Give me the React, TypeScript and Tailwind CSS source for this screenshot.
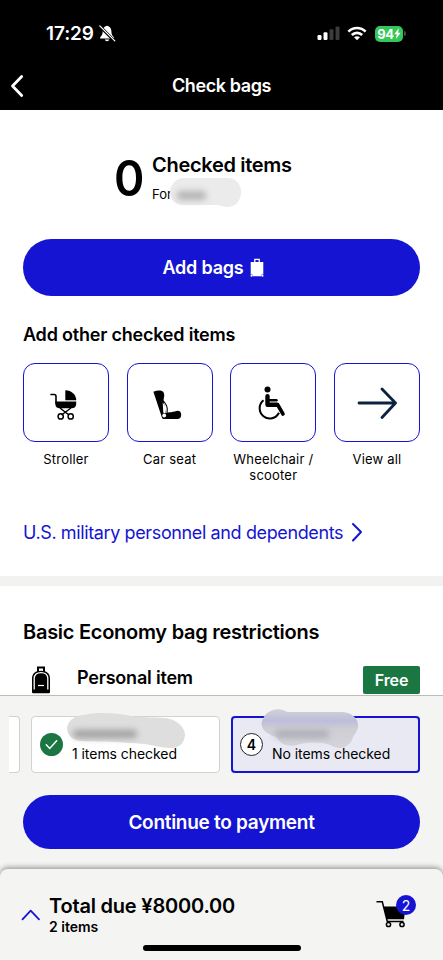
import * as React from 'react';

interface OtherItem {
  label: string;
  icon: React.ReactNode;
}

function StrollerIcon() {
  return (
    <svg className="mt-[4px] mr-[4px]" width="28" height="30" viewBox="0 0 28 30" fill="none">
      <path d="M1 4.5h3.2c1.2 0 1.8.7 1.8 1.9V13" stroke="#000" strokeWidth="1.6" strokeLinecap="round" />
      <path d="M5.3 11.6h20.9v2.1c0 3-1.8 4.5-4.6 4.5H9.9c-2.8 0-4.6-1.5-4.6-4.5z" fill="#000" />
      <path d="M15.3.3C21.6.5 26 4.6 26.3 10.2h-11z" fill="#000" />
      <path d="m10 18 9 7m2-7-9.5 7" stroke="#000" strokeWidth="1.5" />
      <circle cx="10.7" cy="26.4" r="2.6" stroke="#000" strokeWidth="1.5" />
      <circle cx="20.7" cy="26.4" r="2.6" stroke="#000" strokeWidth="1.5" />
    </svg>
  );
}

function CarSeatIcon() {
  return (
    <svg className="mt-[5px] mr-[6px]" width="30" height="30" viewBox="0 0 30 30" fill="none">
      <path
        d="M1.4 1.8C4.4.5 7.7.2 9.9 1c1.9.8 2.600 3 2.300 5.200-.2 1.500-.7 2.800-.6 4.300l2.100 12.700c1.400-1 3.200-.8 5.500-1 2.900-.2 4.600-1.400 6.600-1.400 2 0 3.400 1.500 3.400 3.900 0 3.100-1.500 4.300-3.900 4.300H12.300c-1.200 0-2-.6-2.400-1.600z"
        fill="#000"
      />
      <path d="M10.500 10.500c3.900 2.500 5.700 7.800 4.500 12.500" stroke="#000" strokeWidth="1.1" />
      <path d="M10.700 12.300c2.400 3 3.300 6.800 2.600 11l-2-.5z" fill="#fff" />
      <circle cx="12.200" cy="25.500" r="1.900" fill="#fff" />
    </svg>
  );
}

function WheelchairIcon() {
  return (
    <svg className="mt-[2px] mr-[3px]" width="29" height="35" viewBox="0 0 29 35" fill="none" stroke="#000">
      <circle cx="10.5" cy="3.5" r="3" fill="#000" stroke="none" />
      <path d="M10.5 10.2v8.600h9.500" strokeWidth="4.400" strokeLinecap="round" strokeLinejoin="round" />
      <path d="m20.800 19 5.200 9" strokeWidth="3.600" strokeLinecap="round" />
      <path d="M11 14.300h8.500" strokeWidth="2.400" strokeLinecap="round" />
      <path d="M6.500 14.300a10.200 10.200 0 1 0 15.500 12.500" strokeWidth="2" />
    </svg>
  );
}

function ArrowIcon() {
  return (
    <svg width="40" height="34" viewBox="0 0 40 34" fill="none">
      <path d="M2 17h36M25 3l13.500 14L25 31.500" stroke="#0c2340" strokeWidth="2.800" strokeLinecap="round" strokeLinejoin="round" />
    </svg>
  );
}

const OTHER_ITEMS: OtherItem[] = [
  { label: 'Stroller', icon: <StrollerIcon /> },
  { label: 'Car seat', icon: <CarSeatIcon /> },
  { label: 'Wheelchair / scooter', icon: <WheelchairIcon /> },
  { label: 'View all', icon: <ArrowIcon /> },
];

function StatusBar() {
  return (
    <div className="flex h-[62px] items-center pt-[5px] pl-[46px] pr-[37px]">
      <span className="text-[19px] font-semibold tracking-[-0.1px] leading-6">17:29</span>
      <svg className="ml-[5px]" width="17" height="17" viewBox="0 0 17 17">
        <path d="M8 .8c-3 .6-4.300 2.900-4.300 5.500 0 3.400-1.200 4.600-2.500 6v1.200h13.700v-1.200c-1.400-1.400-2.500-2.600-2.500-6 0-2.600-1.300-4.900-4.400-5.500zM5.800 14.500c.4 1.300 1.100 1.700 2.200 1.700s1.900-.4 2.300-1.700z" fill="#fff" />
        <path d="M.5 1 15.500 16" stroke="#000" strokeWidth="3" />
        <path d="m.8.8 15 15" stroke="#fff" strokeWidth="1.200" strokeLinecap="round" />
      </svg>
      <div className="ml-auto flex items-center">
        <svg width="23" height="15" viewBox="0 0 23 15">
          <rect x="0.5" y="9" width="4" height="5" rx="1.2" fill="#fff" />
          <rect x="6.5" y="6.3" width="4" height="7.7" rx="1.2" fill="#fff" />
          <rect x="12.5" y="3.3" width="4" height="10.7" rx="1.2" fill="#3c3c3c" />
          <rect x="18.5" y="0.5" width="4" height="13.5" rx="1.2" fill="#3c3c3c" />
        </svg>
        <svg className="ml-[7px]" width="20" height="15" viewBox="0 0 20 15" fill="none" stroke="#fff" strokeWidth="2.6">
          <path d="M1.400 5.600c4.900-4.900 12.300-4.900 17.200 0" />
          <path d="M4.800 9c3-2.900 7.400-2.900 10.400 0" />
          <path d="m10 14.300-3-3c1.700-1.500 4.300-1.500 6 0z" fill="#fff" stroke="none" />
        </svg>
        <div className="ml-[8px] flex h-4 w-7 items-center justify-center rounded-[5px] bg-[#34c759]">
          <span className="text-[13px] font-bold leading-4 tracking-[-0.3px]">94</span>
          <svg width="7" height="11" viewBox="0 0 7 11">
            <path d="M4.800 0 .3 6.200h2.500L1.900 11l4.800-6.300H4.100z" fill="#fff" />
          </svg>
        </div>
        <div className="ml-px h-[5px] w-[2px] rounded-r bg-[#4a4a4a]" />
      </div>
    </div>
  );
}

function Header() {
  return (
    <header className="h-[110px] bg-black text-white">
      <StatusBar />
      <div className="flex h-12 items-center px-[9px]">
        <svg width="16" height="24" viewBox="0 0 16 24" fill="none">
          <path d="M12.700 2.500 3.500 12l9.200 9.500" stroke="#fff" strokeWidth="2.800" strokeLinecap="round" strokeLinejoin="round" />
        </svg>
        <h1 className="flex-1 pr-4 text-center text-[18px] font-semibold leading-6 tracking-[-0.4px]">Check bags</h1>
      </div>
    </header>
  );
}

function SuitcaseIcon() {
  return (
    <svg width="14" height="20" viewBox="0 0 14 20">
      <path d="M4.800 4V1.300h4.400V4" fill="none" stroke="#fff" strokeWidth="1.300" />
      <path d="M.7 4h12.600v12.500H.7zM2.500 16h9v2.200h-9z" fill="#fff" />
      <circle cx="1.500" cy="17.800" r="1" fill="#fff" />
      <circle cx="12.500" cy="17.800" r="1" fill="#fff" />
    </svg>
  );
}

function BackpackIcon() {
  return (
    <svg width="20" height="28" viewBox="0 0 20 28" fill="none">
      <path d="M7 6V1.500h6V6" stroke="#000" strokeWidth="2" />
      <path d="M1 26V12.500C1 7.500 4.500 4.800 10 4.800s9 2.700 9 7.700V26c0 .8-.5 1.200-1.200 1.200H2.200C1.500 27.200 1 26.800 1 26z" fill="#000" />
      <path d="M3.200 23.500V12.500c0-4 3-5.900 6.800-5.900s6.800 1.900 6.800 5.900v11" stroke="#fff" strokeWidth="1.300" />
      <path d="M7 19.500h6" stroke="#fff" strokeWidth="1.200" />
    </svg>
  );
}

function CartIcon() {
  return (
    <svg width="30" height="28" viewBox="0 0 30 28" fill="none">
      <path d="M.5 1.700h5.800l5 19.800h16.200" stroke="#000" strokeWidth="1.500" />
      <path d="M7.500 6.500h22L28 19.300H10.700z" fill="#000" />
      <circle cx="12.500" cy="24.500" r="2.100" stroke="#000" strokeWidth="1.500" />
      <circle cx="26" cy="24.500" r="2.100" stroke="#000" strokeWidth="1.500" />
    </svg>
  );
}

function BagSummary() {
  return (
    <div className="flex h-[129px] pt-[41px] pl-[114px]">
      <span className="w-[38px] origin-left scale-x-[0.94] text-[49px] font-semibold leading-[55px]">0</span>
      <div>
        <h2 className="text-[20px] font-semibold leading-7 tracking-[-0.3px]">Checked items</h2>
        <div className="relative text-[13px] leading-[30px]">
          For
          {/* Hidden passenger name */}
          <svg className="absolute left-[18px] top-[-2px]" width="72" height="33" viewBox="0 0 72 33">
            <path d="M14 1h43c9 0 14 6 14 14 0 9-6 15-14 15-5 0-7-2-11-2H14C5 28 0 22 0 15S6 1 14 1z" fill="#ebebeb" />
            <rect x="7" y="14" width="29" height="9" rx="4" fill="#b4b4b4" className="blur-[3px]" />
          </svg>
        </div>
      </div>
    </div>
  );
}

function CheckedItems() {
  return (
    <section className="h-[466px] px-[23px]">
      <div className="-mx-[23px]">
        <BagSummary />
      </div>
      <button className="flex h-[57px] w-full items-center justify-center gap-[6px] rounded-full bg-[#1414d2] pr-[17px] text-[18px] font-semibold tracking-[-0.2px] text-white">
        Add bags
        <SuitcaseIcon />
      </button>
      <h3 className="mt-[27px] text-[18px] font-semibold leading-6 tracking-[-0.21px]">Add other checked items</h3>
      <div className="mt-[16px] flex h-[123px] justify-between">
        {OTHER_ITEMS.map(({ label, icon }) => (
          <div key={label} className="w-[86px]">
            <div className="flex h-[79px] items-center justify-center rounded-xl border-[1.5px] border-[#1414d2]">{icon}</div>
            <p className="mt-[9px] text-center text-[13px] leading-4 tracking-[0.2px]">{label}</p>
          </div>
        ))}
      </div>
      <a className="mt-[34px] flex h-6 items-center text-[18px] tracking-[-0.38px] text-[#1414d2]">
        U.S. military personnel and dependents
        <svg className="ml-2" width="12" height="20" viewBox="0 0 12 20" fill="none">
          <path d="m2 2 8 8-8 8.500" stroke="#1414d2" strokeWidth="2" strokeLinecap="round" strokeLinejoin="round" />
        </svg>
      </a>
    </section>
  );
}

function Restrictions() {
  return (
    <section className="h-[109px] px-[23px] pt-8">
      <h3 className="text-[20px] font-semibold leading-7 tracking-[-0.27px]">Basic Economy bag restrictions</h3>
      <div className="mt-[20px] flex items-start pl-2">
        <BackpackIcon />
        <span className="ml-[26px] text-[18px] font-semibold leading-6 tracking-[-0.2px]">Personal item</span>
        <span className="ml-auto flex h-7 w-[57px] items-center justify-center rounded-[2px] bg-[#1b7742] text-[16px] font-semibold tracking-[-0.1px] text-white">
          Free
        </span>
      </div>
    </section>
  );
}

function TravelerCards() {
  return (
    <div className="ml-[9px] flex h-[57px]">
      <div className="w-[11px] shrink-0 rounded-r-[4px] border-y border-r border-[#d2d2d0] bg-white" />
      <div className="relative ml-[11px] flex w-[189px] shrink-0 items-center rounded-[4px] border border-[#d2d2d0] bg-white pl-2">
        <svg width="23" height="23" viewBox="0 0 23 23" fill="none">
          <circle cx="11.5" cy="11.5" r="11.5" fill="#1b7742" />
          <path d="m6.300 11.800 3.400 3.700 7-7.700" stroke="#fff" strokeWidth="1.500" strokeLinecap="round" />
        </svg>
        <span className="ml-[9px] mt-[19px] text-[14px] leading-5 tracking-[-0.05px]">1 items checked</span>
        <svg className="absolute left-[35px] top-[-4px]" width="120" height="38" viewBox="0 0 120 38">
          <path d="M17 2C30-1 47 0 59 2c14 3 26 2 39 3 11 1 19 8 20 16 0 9-6 14-14 14-10 0-25-5-41-5-18-2-34-1-47-2C6 28 0 22 0 15 1 7 7 3 17 2z" fill="#dedede" />
          <rect x="6" y="17" width="64" height="8" rx="4" fill="#a0a0a0" className="blur-[3px]" />
        </svg>
      </div>
      <div className="relative ml-[11px] flex w-[189px] shrink-0 items-center rounded-[4px] border-2 border-[#1414d2] bg-[#e9e9f4] pl-[7px]">
        <span className="flex h-[23px] w-[23px] items-center justify-center rounded-full border border-[#222] bg-white text-[14px] font-semibold">
          4
        </span>
        <span className="ml-[9px] mt-[19px] text-[14px] leading-5 tracking-[-0.05px]">No items checked</span>
        <svg className="absolute left-[28px] top-[-10px]" width="100" height="42" viewBox="0 0 100 42">
          <defs>
            <linearGradient id="smudge" x1="0" y1="0" x2="0" y2="1">
              <stop offset="0" stopColor="#d2d2d6" />
              <stop offset="0.3" stopColor="#bdbddc" />
              <stop offset="0.5" stopColor="#cdcdd3" />
              <stop offset="1" stopColor="#d4d4da" />
            </linearGradient>
          </defs>
          <path d="M2 11C5 2 18-2 26 4h54c11 0 18 7 17 15-1 6-5 8-6 13-5 9-14 10-22 5-10-3-18-3-30-1-10 4-20 1-23-7C6 27-3 20 2 11z" fill="url(#smudge)" />
          <rect x="14" y="22" width="54" height="8" rx="4" fill="#adadb6" className="blur-[3px]" />
        </svg>
      </div>
    </div>
  );
}

function TotalBar() {
  return (
    <div className="h-[91px] rounded-t-[8px] bg-[#f4f4f2] shadow-[0_-2px_5px_rgba(0,0,0,0.35)]">
      <div className="flex h-[76px] pl-[21px] pr-[27px]">
        <svg className="mt-[40px]" width="20" height="12" viewBox="0 0 20 12" fill="none">
          <path d="m1.500 10.300 8.200-8.600 8.300 8.600" stroke="#1414d2" strokeWidth="1.800" strokeLinecap="round" strokeLinejoin="round" />
        </svg>
        <div className="ml-2 pt-[25px]">
          <p className="text-[20px] font-semibold leading-6 tracking-[-0.2px]">Total due ¥8000.00</p>
          <p className="text-[14px] font-semibold leading-[18px]">2 items</p>
        </div>
        <div className="relative ml-auto w-10 pt-[31px]">
          <CartIcon />
          <span className="absolute right-0 top-[26px] flex h-5 w-5 items-center justify-center rounded-full bg-[#1414d2] text-[14px] text-white">
            2
          </span>
        </div>
      </div>
      <div className="mx-auto h-[6px] w-[158px] rounded-full bg-black" />
    </div>
  );
}

export default function App() {
  return (
    <div className="flex h-[960px] w-[443px] flex-col overflow-hidden bg-white font-['Inter',sans-serif] text-black">
      <Header />
      <main>
        <CheckedItems />
        <div className="h-[10px] bg-[#f2f2f0]" />
        <Restrictions />
      </main>
      <footer className="flex-1 border-t border-[#bcbcbc] bg-[#f4f4f2]">
        <div className="h-[173px] pt-[20px]">
          <TravelerCards />
          <div className="px-[23px] pt-[22px]">
            <button className="h-[54px] w-full rounded-full bg-[#1414d2] pt-[3px] text-[19px] font-semibold tracking-[-0.28px] text-white">
              Continue to payment
            </button>
          </div>
        </div>
        <TotalBar />
      </footer>
    </div>
  );
}
